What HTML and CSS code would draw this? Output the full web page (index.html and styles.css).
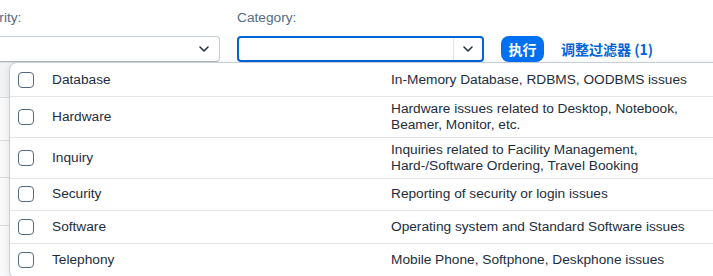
FILE: index.html
```html
<!DOCTYPE html>
<html lang="zh">
<head>
<meta charset="utf-8">
<link rel="stylesheet" href="styles.css">
</head>
<body>
<div class="page">
  <div class="filterbar">
    <div class="field field-cut">
      <label class="field-label">Priority:</label>
      <div class="select">
        <span class="select-text"></span>
        <svg class="chev" width="10" height="6" viewBox="0 0 10 6"><path d="M1 1 L5 5 L9 1" fill="none" stroke="#1d2d3e" stroke-width="1.5" stroke-linecap="round" stroke-linejoin="round"/></svg>
      </div>
    </div>
    <div class="field">
      <label class="field-label">Category:</label>
      <div class="combo">
        <span class="combo-text"></span>
        <span class="combo-btn">
          <svg class="chev" width="10" height="6" viewBox="0 0 10 6"><path d="M1 1 L5 5 L9 1" fill="none" stroke="#1d2d3e" stroke-width="1.5" stroke-linecap="round" stroke-linejoin="round"/></svg>
        </span>
      </div>
    </div>
    <div class="actions">
      <button class="go">执行</button>
      <a class="adapt">调整过滤器 (1)</a>
    </div>
  </div>
  <div class="table">
    <div class="trow thead"></div>
    <div class="trow r1"></div>
    <div class="trow r2"></div>
    <div class="trow r3"></div>
    <div class="trow r4"></div>
  </div>

  <div class="popover">
    <div class="item">
      <span class="cb"></span><span class="name">Database</span><span class="desc">In-Memory Database, RDBMS, OODBMS issues</span>
    </div>
    <div class="item">
      <span class="cb"></span><span class="name">Hardware</span><span class="desc">Hardware issues related to Desktop, Notebook,<br>Beamer, Monitor, etc.</span>
    </div>
    <div class="item">
      <span class="cb"></span><span class="name">Inquiry</span><span class="desc">Inquiries related to Facility Management,<br>Hard-/Software Ordering, Travel Booking</span>
    </div>
    <div class="item">
      <span class="cb"></span><span class="name">Security</span><span class="desc">Reporting of security or login issues</span>
    </div>
    <div class="item">
      <span class="cb"></span><span class="name">Software</span><span class="desc">Operating system and Standard Software issues</span>
    </div>
    <div class="item">
      <span class="cb"></span><span class="name">Telephony</span><span class="desc">Mobile Phone, Softphone, Deskphone issues</span>
    </div>
  </div>
</div>
</body>
</html>
```

FILE: styles.css
```css
html, body {
  margin: 0;
  padding: 0;
  background: #ffffff;
}
body {
  font-family: "Liberation Sans", "Noto Sans CJK SC", sans-serif;
  font-size: 14px;
  color: #1d2d3e;
  width: 713px;
  height: 276px;
  overflow: hidden;
}
.page {
  position: relative;
  width: 713px;
  height: 276px;
  overflow: hidden;
}
.filterbar {
  display: flex;
  align-items: flex-end;
  gap: 17px;
  padding-top: 9px;
  height: 63px;
  box-sizing: border-box;
  border-bottom: 1px solid #d9dde2;
}
.field {
  display: flex;
  flex-direction: column;
  gap: 9px;
}
.field-cut {
  margin-left: -25px;
}
.field-label {
  color: #556b82;
  font-size: 13.7px;
  line-height: 18px;
  height: 18px;
}
.select {
  width: 245px;
  height: 26px;
  box-sizing: border-box;
  border: 1px solid #c4cbd2;
  border-bottom-color: #b0b8c1;
  border-radius: 4px;
  background: #ffffff;
  display: flex;
  align-items: center;
  justify-content: flex-end;
  padding-right: 10px;
}
.combo {
  width: 247px;
  height: 26px;
  box-sizing: border-box;
  border: 2px solid #0064d9;
  border-radius: 4px;
  background: #ffffff;
  display: flex;
  align-items: stretch;
}
.combo-text {
  flex: 1;
}
.combo-btn {
  width: 28px;
  border-left: 1px solid #dfe5ec;
  display: flex;
  align-items: center;
  justify-content: center;
}
.chev {
  display: block;
}
.actions {
  display: flex;
  align-items: center;
  gap: 17px;
}
.go {
  height: 26px;
  width: 43px;
  border: none;
  border-radius: 8px;
  background: #0070f2;
  color: #ffffff;
  font-family: "Noto Sans CJK SC", sans-serif;
  font-weight: 700;
  font-size: 14px;
  padding: 0;
  line-height: 26px;
}
.adapt {
  color: #0064d9;
  font-family: "Noto Sans CJK SC", sans-serif;
  font-weight: 700;
  font-size: 14px;
  line-height: 26px;
}
.table {
  display: flex;
  flex-direction: column;
}
.trow {
  border-bottom: 1px solid #d9dde2;
  background: #fafafa;
}
.thead {
  height: 34px;
  background: #f2f3f4;
}
.r1 { height: 42px; }
.r2 { height: 36px; }
.r3 { height: 47px; }
.r4 { height: 60px; }

.popover {
  position: absolute;
  left: 9px;
  top: 62px;
  width: 720px;
  background: #ffffff;
  border: 1px solid #c8ced5;
  border-radius: 8px;
  box-shadow: 0 2px 8px rgba(34, 54, 73, 0.12);
  padding-top: 1px;
  padding-bottom: 2px;
}
.item {
  display: grid;
  grid-template-columns: 34px 339px 1fr;
  align-items: center;
  min-height: 32.5px;
  padding: 4px 0 4px 8px;
  box-sizing: border-box;
  border-bottom: 1px solid #e5e5e5;
  line-height: 16px;
  font-size: 13.7px;
}
.item:last-child {
  border-bottom: none;
}
.cb {
  width: 16px;
  height: 16px;
  box-sizing: border-box;
  border: 1px solid #556b82;
  border-radius: 4px;
  background: #ffffff;
}
```
